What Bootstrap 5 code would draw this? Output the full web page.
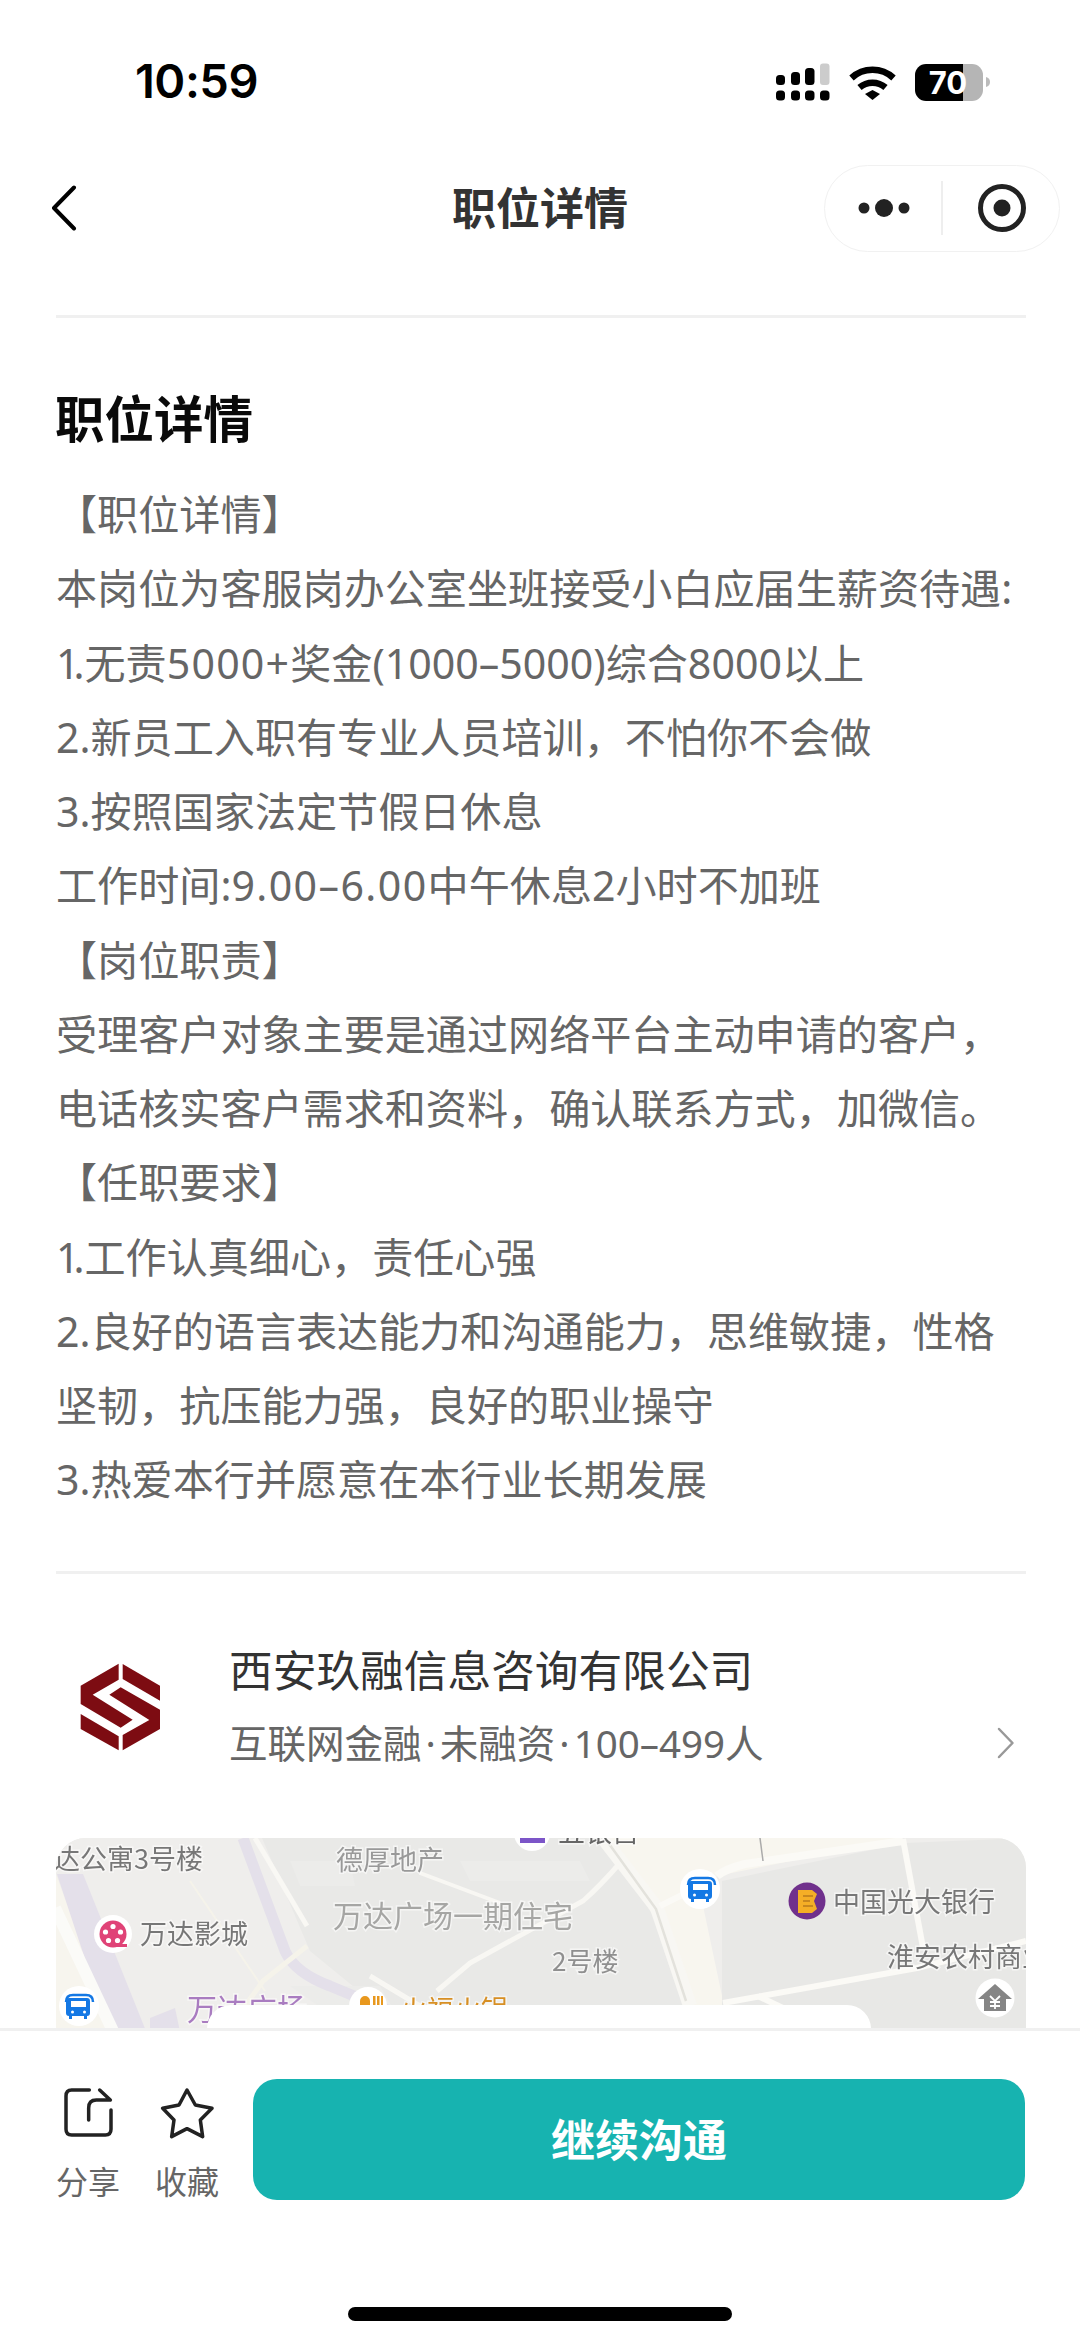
<!DOCTYPE html>
<html lang="zh-CN">
<head>
<meta charset="utf-8">
<title>职位详情</title>
<link href="https://cdn.jsdelivr.net/npm/bootstrap@5.3.0/dist/css/bootstrap.min.css" rel="stylesheet">
<style>
html,body{margin:0;padding:0;background:#fff;}
body{font-family:"Noto Sans","Noto Sans CJK SC",sans-serif;color:#666;}
.phone{width:1080px;height:2341px;overflow:hidden;background:#fff;}
.status-row{height:120px;padding:62px 90px 0 135px;}
.clock{font-family:"Inter",sans-serif;font-size:47px;font-weight:600;color:#000;line-height:38px;letter-spacing:-.5px;}
.status-icons{gap:19px;}
.top-bar{height:176px;padding:0 20px;display:grid;grid-template-columns:1fr auto 1fr;align-items:center;}
.back-icon{margin-left:31px;display:block;}
.bar-title{font-size:44px;font-weight:700;color:#333;line-height:60px;}
.capsule{width:236px;height:87px;border:1.5px solid #f1f1f1;border-radius:44px;justify-self:end;}
.capsule-split{width:1.5px;height:54px;background:#eee;}
.capsule-half{width:118px;}
.scroll-area{height:1732px;overflow:hidden;padding:19px 54px 0 56px;}
.rule{height:3px;background:#f0f0f0;}
.job-heading{font-size:49.5px;font-weight:700;color:#0a0a0a;line-height:60px;margin:71px 0 28px -1px;}
.job-text{font-size:41.1px;line-height:74.25px;color:#666;}
.num-one{letter-spacing:-6px;}
.num-wide{letter-spacing:1.2px;}
.num-wider{letter-spacing:1.4px;}
.rule-two{margin-top:54px;}
.company{margin-top:66px;}
.logo-box{margin:9px 49px 0 4px;flex:none;display:block;}
.company-name{font-size:43.7px;line-height:60px;color:#333;}
.company-sub{font-size:38.5px;line-height:60px;color:#666;margin-top:13px;}
.sep-dot{margin:0 4px;}
.go-icon{margin:87px 11px 0 auto;display:block;}
.map-box{margin-top:65px;height:260px;border-radius:30px;overflow:hidden;position:relative;background:#efeeec;}
.map-art{display:block;filter:blur(.5px);}
.map-art text{font-family:"Noto Sans CJK SC",sans-serif;paint-order:stroke;stroke:rgba(255,255,255,.55);stroke-width:3px;}
.map-cover{position:absolute;left:151px;top:167px;width:664px;height:80px;background:#fff;border-radius:24px 24px 0 0;}
.foot-bar{height:313px;border-top:3px solid #f0f0f0;padding:48px 55px 0 56px;}
.foot-tools{gap:35px;margin-right:34px;}
.foot-tool{width:64px;}
.foot-tool svg{display:block;margin:7px auto 0;}
.foot-label{font-size:32px;line-height:40px;color:#666;margin-top:22px;white-space:nowrap;}
.chat-btn{height:121px;border-radius:24px;background:#17b3b0;border:0;color:#fff;font-size:44px;font-weight:700;}
.chat-btn:hover{background:#17b3b0;color:#fff;}
.home-bar{width:384px;height:14px;border-radius:7px;background:#000;margin:105px 0 0 292px;}
</style>
</head>
<body>
<div class="phone d-flex flex-column">
  <div class="status-row d-flex justify-content-between">
    <div class="clock">10:59</div>
    <div class="status-icons d-flex align-items-start">
      <svg width="54" height="40" viewBox="0 0 54 40"><g fill="#000"><rect x="0" y="13" width="9" height="10" rx="3.5"/><rect x="15" y="10" width="9" height="13" rx="3.5"/><rect x="29" y="6" width="9.5" height="17" rx="3.5"/><rect x="44" y="1.5" width="9.5" height="21.5" rx="3" fill="#ccc"/><rect x="0" y="28.5" width="9" height="10" rx="3.5"/><rect x="15" y="28.5" width="9" height="10" rx="3.5"/><rect x="29" y="28.5" width="9.5" height="10" rx="3.5"/><rect x="44" y="28.5" width="9.5" height="10" rx="3.5"/></g></svg>
      <svg class="mt-1" width="47" height="34" viewBox="0 0 47 34"><g fill="none" stroke="#000" stroke-width="6.5"><path d="M2.5 12 A31 31 0 0 1 44.5 12"/><path d="M10.5 21.5 A20 20 0 0 1 36.5 21.5"/></g><path d="M16 28 L23.5 24 L31 28 L23.5 34Z" fill="#000"/></svg>
      <svg width="75" height="40" viewBox="0 0 75 40"><defs><clipPath id="batClip"><rect x="0" y="2" width="68" height="37" rx="11"/></clipPath></defs><g clip-path="url(#batClip)"><rect x="0" y="2" width="48" height="37" fill="#000"/><rect x="48" y="2" width="20" height="37" fill="#b5b5b5"/></g><path d="M71 15 q4 1 4 5 q0 4 -4 5z" fill="#bbb"/><text x="33" y="32" text-anchor="middle" fill="#fff" font-size="31" font-weight="700" font-family="Inter,sans-serif">70</text></svg>
    </div>
  </div>

  <div class="top-bar">
    <svg class="back-icon" width="26" height="46" viewBox="0 0 26 46"><path d="M23 2.5 L3 23 L23 43.5" fill="none" stroke="#000" stroke-width="4" stroke-linecap="round" stroke-linejoin="round"/></svg>
    <div class="bar-title text-center">职位详情</div>
    <div class="capsule d-flex align-items-center">
      <div class="capsule-half d-flex justify-content-center">
        <svg width="62" height="20" viewBox="0 0 62 20"><g fill="#222"><circle cx="12" cy="10" r="5.5"/><circle cx="32" cy="10" r="9"/><circle cx="52" cy="10" r="5.5"/></g></svg>
      </div>
      <div class="capsule-split"></div>
      <div class="capsule-half d-flex justify-content-center">
        <svg width="50" height="50" viewBox="-1 0 50 50"><circle cx="25" cy="25" r="21.5" fill="none" stroke="#222" stroke-width="5"/><circle cx="25" cy="25" r="8.5" fill="#222"/></svg>
      </div>
    </div>
  </div>

  <div class="scroll-area">
    <div class="rule"></div>
    <h1 class="job-heading">职位详情</h1>
    <div class="job-text">
      <div>【职位详情】</div>
      <div>本岗位为客服岗办公室坐班接受小白应届生薪资待遇:</div>
      <div><span class="num-one">1</span>.无责<span class="num-wide">5000+</span>奖金(1000–5000)综合8000以上</div>
      <div>2.新员工入职有专业人员培训，不怕你不会做</div>
      <div>3.按照国家法定节假日休息</div>
      <div>工作时间:<span class="num-wider">9.00–6.00</span>中午休息2小时不加班</div>
      <div>【岗位职责】</div>
      <div>受理客户对象主要是通过网络平台主动申请的客户，</div>
      <div>电话核实客户需求和资料，确认联系方式，加微信。</div>
      <div>【任职要求】</div>
      <div><span class="num-one">1</span>.工作认真细心，责任心强</div>
      <div>2.良好的语言表达能力和沟通能力，思维敏捷，性格坚韧，抗压能力强，良好的职业操守</div>
      <div>3.热爱本行并愿意在本行业长期发展</div>
    </div>
    <div class="rule rule-two"></div>
    <div class="company d-flex">
      <svg class="logo-box" width="120" height="120" viewBox="0 0 360 360"><g fill="#7d0c12"><path d="M188 45 L300 110 V155 L188 90Z"/><path d="M176 44 L62 110 V165 L182 236 L218 212 L98 137 L176 92Z"/><path d="M182 115 L148 137 L268 213 L188 258 V304 L300 240 V182Z"/><path d="M62 195 L176 262 V304 L62 240Z"/></g></svg>
      <div>
        <div class="company-name">西安玖融信息咨询有限公司</div>
        <div class="company-sub">互联网金融<span class="sep-dot">·</span>未融资<span class="sep-dot">·</span>100–499人</div>
      </div>
      <svg class="go-icon" width="18" height="32" viewBox="0 0 18 32"><path d="M2 2 L15.5 16 L2 30" fill="none" stroke="#999" stroke-width="2.5" stroke-linecap="round" stroke-linejoin="round"/></svg>
    </div>
    <div class="map-box">
      <svg class="map-art" width="970" height="260" viewBox="56 1837 970 260">
        <rect x="56" y="1837" width="970" height="260" fill="#efeeec"/>
        <path d="M262 1837 H610 L672 1950 L702 2040 H420 L310 1950Z" fill="#e9e9e7"/>
        <path d="M722 1880 L905 1842 L1026 1837 V2040 H722Z" fill="#e8e8e6"/>
        <path d="M290 1860 H350 L355 1885 H300Z M460 1860 H580 L590 1880 H470Z M290 1985 L380 1985 L400 2020 H340Z" fill="#ececea"/>
        <path d="M56 1873 L118 2040 L56 2040Z" fill="#f7f5ee"/>
        <path d="M57 1873 L83 1873 L150 2040 L112 2040Z" fill="#e4e0ea"/>
        <path d="M55 1907 L113 2030" stroke="#fbfbf8" stroke-width="12" fill="none"/>
        <path d="M150 2017 L175 2007 L182 2040 L150 2040Z" fill="#e4e0ea"/>
        <path d="M243 1837 L285 1950 Q295 1972 330 1985 L395 2012" stroke="#e4e0ea" stroke-width="11" fill="none"/>
        <path d="M255 1837 L307 1925" stroke="#f9f8f4" stroke-width="5" fill="none"/>
        <path d="M307 1945 L263 1980 L245 2005" stroke="#f5f3ea" stroke-width="5" fill="none"/>
        <path d="M190 1880 L265 1990" stroke="#f5f3ea" stroke-width="2" fill="none"/>
        <path d="M610 1837 H903 L717 1875 L702 1900 L722 1995 V2030 H690 L660 1915Z" fill="#f8f6ef"/>
        <path d="M420 1872 L500 1902" stroke="#f8f7f3" stroke-width="4" fill="none"/>
        <path d="M620 1862 Q600 1885 583 1900 L470 1962 L437 1990" stroke="#f8f7f3" stroke-width="5" fill="none"/>
        <path d="M370 1975 L420 2005" stroke="#f8f7f3" stroke-width="5" fill="none"/>
        <path d="M603 1837 L657 1907 L690 2005" stroke="#f8f7f3" stroke-width="14" fill="none"/>
        <path d="M607 1840 L656 1908 L686 2000" stroke="#e3e2dc" stroke-width="2.5" fill="none"/>
        <path d="M660 1905 L700 1885" stroke="#fbfaf6" stroke-width="6" fill="none"/>
        <path d="M717 1875 Q725 1868 745 1863 L903 1840" stroke="#fbfaf6" stroke-width="8" fill="none"/>
        <path d="M903 1838 L923 1947" stroke="#fbfaf6" stroke-width="6" fill="none"/>
        <path d="M723 2002 L917 1967 L1026 1940" stroke="#fbfaf6" stroke-width="6" fill="none"/>
        <path d="M758 1995 L785 2008" stroke="#fbfaf6" stroke-width="6" fill="none"/>
        <path d="M760 1837 L763 1860" stroke="#aaa" stroke-width="1.5" fill="none"/>
        <text x="53" y="1868" font-size="27" fill="#777">达公寓3号楼</text>
        <text x="336" y="1869" font-size="27" fill="#999">德厚地产</text>
        <text x="333" y="1926" font-size="30" fill="#a6a6a4">万达广场一期住宅</text>
        <text x="140" y="1943" font-size="27" fill="#777">万达影城</text>
        <text x="833" y="1911" font-size="27" fill="#777">中国光大银行</text>
        <text x="552" y="1970" font-size="26" fill="#8f8f8f">2号楼</text>
        <text x="887" y="1966" font-size="27" fill="#777">淮安农村商业</text>
        <text x="187" y="2019" font-size="30" fill="#a97cc0">万达广场</text>
        <text x="400" y="2019" font-size="27" fill="#d78f24">火福火锅</text>
        <text x="558" y="1841" font-size="27" fill="#666">五银宫</text>

        <circle cx="532" cy="1832" r="18" fill="#fff"/>
        <rect x="520" y="1837" width="25" height="5" fill="#7c55c8"/>

        <circle cx="113" cy="1933" r="19" fill="#fff"/>
        <circle cx="113" cy="1933" r="13.5" fill="#e04377"/>
        <path d="M113 1946 H127 V1943 H118Z" fill="#e04377"/>
        <g fill="#fff"><circle cx="113" cy="1925.5" r="2.6"/><circle cx="105.5" cy="1931" r="2.6"/><circle cx="120.5" cy="1931" r="2.6"/><circle cx="108.5" cy="1939.5" r="2.6"/><circle cx="117.5" cy="1939.5" r="2.6"/></g>

        <circle cx="79" cy="2005" r="20" fill="#fff"/>
        <g id="busIcon">
          <path d="M66 2001 q0 -7 7 -7 h13 q7 0 7 7" stroke="#1478e4" stroke-width="2.5" fill="none"/>
          <path d="M70 1997 h18 q3 0 3 3 v12 q0 3 -3 3 v3 h-3 v-3 h-12 v3 h-3 v-3 q-3 0 -3 -3 v-12 q0 -3 3 -3z" fill="#1478e4" transform="translate(-1,0)"/>
          <rect x="71" y="2000" width="15" height="6" fill="#fff"/>
          <circle cx="72.5" cy="2011" r="1.5" fill="#fff"/><circle cx="84.5" cy="2011" r="1.5" fill="#fff"/>
        </g>
        <circle cx="700" cy="1888" r="20" fill="#fff"/>
        <use href="#busIcon" x="622" y="-117"/>

        <circle cx="368" cy="2005" r="19" fill="#fff"/>
        <path d="M360 2004 V2000 A5 5 0 0 1 370 2000 V2004Z M373 1995 h2.5 v9 h-2.5z M377 1995 h2.5 v9 h-2.5z M381 1995 h2 v9 h-2z" fill="#e8981e"/>

        <circle cx="807" cy="1900" r="18.5" fill="#70308c"/>
        <path d="M798 1889 H812 L817 1893 L814 1900 L817 1908 L812 1912 H798Z" fill="#f5ae26"/>
        <path d="M803 1895 H813 M803 1900 H810 M803 1905 H813" stroke="#b97b1c" stroke-width="1.4"/>

        <circle cx="995" cy="1997" r="19.5" fill="#fff"/>
        <path d="M995 1983 L1012 1998 H1006 V2010 H984 V1998 H978Z" fill="#858585"/>
        <path d="M990 1995 L995 2000 L1000 1995 M995 2000 V2008 M990 2001 H1000 M990 2005 H1000" stroke="#fff" stroke-width="1.8" fill="none"/>
      </svg>
      <div class="map-cover"></div>
    </div>
  </div>

  <div class="foot-bar">
    <div class="d-flex align-items-start">
      <div class="foot-tools d-flex">
        <div class="foot-tool text-center">
          <svg width="54" height="54" viewBox="60 110 162 162"><path d="M145 122 H92 Q75 122 75 140 V240 Q75 257 92 257 H193 Q210 257 210 240 V182 M176 122 L208 152 H166 Q143 152 143 176 V212" fill="none" stroke="#222" stroke-width="10.5" stroke-linecap="round" stroke-linejoin="round"/></svg>
          <div class="foot-label">分享</div>
        </div>
        <div class="foot-tool text-center">
          <svg width="54" height="54" viewBox="357 108 162 162"><path d="M438 120 L463 165 L513 175 L478 210 L485 260 L438 236 L392 260 L399 210 L365 175 L414 165Z" fill="none" stroke="#222" stroke-width="10.5" stroke-linejoin="round"/></svg>
          <div class="foot-label">收藏</div>
        </div>
      </div>
      <button type="button" class="btn chat-btn flex-grow-1">继续沟通</button>
    </div>
    <div class="home-bar"></div>
  </div>
</div>
<script src="https://cdn.jsdelivr.net/npm/bootstrap@5.3.0/dist/js/bootstrap.bundle.min.js"></script>
</body>
</html>
